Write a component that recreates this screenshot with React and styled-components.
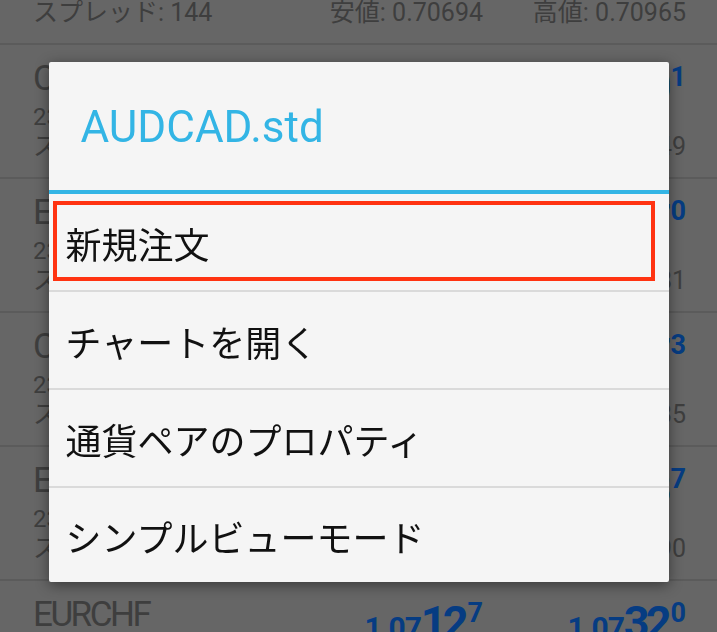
import React from 'react';
import styled, { createGlobalStyle } from 'styled-components';

const GlobalStyle = createGlobalStyle`
  * { box-sizing: border-box; }
  body {
    margin: 0;
    background: #666666;
    overflow: hidden;
    font-family: Roboto, "Noto Sans CJK JP", sans-serif;
  }
`;

const List = styled.div`
  margin-top: -89px;
`;

const Row = styled.div`
  height: 134px;
  border-bottom: 2px solid #5b5b5b;
  padding: 0 31px 0 33px;
`;

const Line = styled.div`
  display: grid;
  grid-template-columns: 1fr 160px 160px;
  column-gap: 43px;
  white-space: nowrap;
`;

const NameLine = styled(Line)`
  height: 58px;
`;

const Name = styled.div`
  padding-top: 17px;
  font-size: 35px;
  line-height: 34px;
  letter-spacing: -2.5px;
  color: #3e3e3e;
`;

const Price = styled.div`
  padding-top: 19px;
  text-align: right;
  font-size: 45px;
  line-height: 45px;
  font-weight: 700;
  color: #063c82;
`;

const Small = styled.span`
  font-size: 30px;
  line-height: 0;
  letter-spacing: -1px;
`;

const Big = styled.span`
  letter-spacing: -4px;
`;

const Sup = styled.span`
  font-size: 27px;
  line-height: 0;
  vertical-align: 16px;
  margin-left: 3px;
`;

const TimeLine = styled.div`
  height: 32px;
  padding-top: 2px;
  font-size: 24px;
  line-height: 24px;
  color: #3e3e3e;
`;

const StatsLine = styled(Line)`
  height: 24px;
  font-size: 25px;
  line-height: 24px;
  color: #3e3e3e;
`;

const Stat = styled.div`
  text-align: ${(p) => (p.right ? 'right' : 'left')};
`;

const Backdrop = styled.div`
  position: fixed;
  inset: 0;
  display: flex;
  justify-content: center;
  align-items: flex-start;
  padding-top: 62px;
`;

const Dialog = styled.div`
  width: 620px;
  background: #f5f5f5;
  border-radius: 2px;
  box-shadow: 0 3px 14px rgba(0, 0, 0, 0.45);
  overflow: hidden;
`;

const Header = styled.div`
  height: 132px;
  display: flex;
  align-items: center;
  padding: 2px 0 0 32px;
  border-bottom: 4px solid #33b5e5;
`;

const Title = styled.div`
  font-family: Roboto, sans-serif;
  font-size: 44px;
  color: #33b5e5;
`;

const Item = styled.div`
  position: relative;
  height: 98px;
  display: flex;
  align-items: center;
  padding: 1px 0 0 17px;
  border-bottom: 2px solid #dadada;
  font-family: "Noto Sans CJK JP", sans-serif;
  font-size: 36px;
  color: #111111;

  &:last-child {
    height: 94px;
    border-bottom: none;
  }
`;

const Highlight = styled.div`
  position: absolute;
  top: 7px;
  left: 4px;
  right: 14px;
  bottom: 9px;
  border: 4px solid #ff3311;
`;

const quotes = [
  { name: 'AUDCAD', time: '23:59:59', spread: '144', low: '0.70694', high: '0.70965', bid: ['0.70', '75', '3'], ask: ['0.70', '89', '7'] },
  { name: 'CADCHF', time: '23:59:58', spread: '51', low: '0.72036', high: '0.72349', bid: ['0.72', '15', '0'], ask: ['0.72', '20', '1'] },
  { name: 'EURAUD', time: '23:59:59', spread: '60', low: '1.52043', high: '1.52781', bid: ['1.52', '41', '0'], ask: ['1.52', '47', '0'] },
  { name: 'CADJPY', time: '23:59:57', spread: '45', low: '88.185', high: '88.635', bid: ['88.', '42', '8'], ask: ['88.', '47', '3'] },
  { name: 'EURCAD', time: '23:59:59', spread: '70', low: '1.51234', high: '1.51890', bid: ['1.51', '56', '0'], ask: ['1.51', '63', '7'] },
  { name: 'EURCHF', time: '23:59:59', spread: '19', low: '1.07021', high: '1.07400', bid: ['1.07', '12', '7'], ask: ['1.07', '32', '0'] },
];

const menu = ['新規注文', 'チャートを開く', '通貨ペアのプロパティ', 'シンプルビューモード'];

const PriceCell = ({ parts }) => (
  <Price>
    <Small>{parts[0]}</Small>
    <Big>{parts[1]}</Big>
    <Sup>{parts[2]}</Sup>
  </Price>
);

export default function App() {
  return (
    <>
      <GlobalStyle />
      <List>
        {quotes.map((q) => (
          <Row key={q.name}>
            <NameLine>
              <Name>{q.name}</Name>
              <PriceCell parts={q.bid} />
              <PriceCell parts={q.ask} />
            </NameLine>
            <TimeLine>{q.time}</TimeLine>
            <StatsLine>
              <Stat>スプレッド: {q.spread}</Stat>
              <Stat right>安値: {q.low}</Stat>
              <Stat right>高値: {q.high}</Stat>
            </StatsLine>
          </Row>
        ))}
      </List>
      <Backdrop>
        <Dialog>
          <Header>
            <Title>AUDCAD.std</Title>
          </Header>
          {menu.map((label, i) => (
            <Item key={label}>
              {i === 0 && <Highlight />}
              {label}
            </Item>
          ))}
        </Dialog>
      </Backdrop>
    </>
  );
}
